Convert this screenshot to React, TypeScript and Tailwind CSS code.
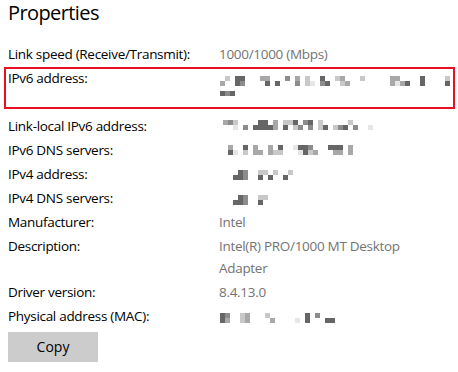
import React from "react";

const shade: Record<string, string> = {
  "1": "bg-[#e6e6e6]",
  "2": "bg-[#c8c8c8]",
  "3": "bg-[#a8a8a8]",
  "4": "bg-[#8c8c8c]",
  "5": "bg-[#666666]",
};

// pixelated (redacted) value, one string per 5px row
const Pixels = ({ rows, className }: { rows: string[]; className: string }) => (
  <div className={`flex flex-col ${className}`}>
    {rows.map((r, i) => (
      <div key={i} className="flex">
        {r.split("").map((c, j) => (
          <span key={j} className={`w-[5px] h-[5px] ${shade[c] ?? ""}`} />
        ))}
      </div>
    ))}
  </div>
);

const Row = ({ label, children }: { label: string; children: React.ReactNode }) => (
  <div className="flex">
    <div className="w-[211px] shrink-0 text-black">{label}</div>
    <div className="flex-1 text-[#737373]">{children}</div>
  </div>
);

export default function App() {
  return (
    <div className="w-[458px] h-[372px] bg-white overflow-hidden pl-2 font-['Segoe_UI','Open_Sans',sans-serif] text-[13.5px] tracking-[-0.3px] leading-[24px]">
      {/* Title */}
      <h1 className="text-[20px] leading-[26px] tracking-[-0.6px] font-normal text-black">Properties</h1>

      <div className="mt-[16px]">
        <Row label="Link speed (Receive/Transmit):">1000/1000 (Mbps)</Row>

        {/* IPv6 with red highlight box */}
        <div className="relative">
          <div className="absolute -left-1 top-[1px] w-[451px] h-[42px] border-2 border-[#e81123]" />
          <Row label="IPv6 address:">
            <div className="h-[48px]">
              <Pixels
                className="pt-[10px] pl-[1px]"
                rows={[
                  ".2.55...33...4.3.2..5..23...2.....33....5....2",
                  "3..54....5.5...4.21.45..23........3135..5....5",
                ]}
              />
              <Pixels className="mt-[5px] pl-[1px]" rows={["545"]} />
            </div>
          </Row>
        </div>

        <Row label="Link-local IPv6 address:">
          <div className="h-[24px]">
            <Pixels
              className="pt-[6px] pl-[4px]"
              rows={["342....55.3.225.45.2.....2...", "..1.4.55553.5.24.4.25.245.4..1"]}
            />
          </div>
        </Row>
        <Row label="IPv6 DNS servers:">
          <div className="h-[24px]">
            <Pixels
              className="pt-[7px] pl-[9px]"
              rows={["3..5.3..3.5..1554...555.3", "51.2.33.322...1523...33.3"]}
            />
          </div>
        </Row>
        <Row label="IPv4 address:">
          <div className="h-[24px]">
            <Pixels className="pt-[8px] pl-[14px]" rows={[".54..22.2..2", "554..5.5..5"]} />
          </div>
        </Row>
        <Row label="IPv4 DNS servers:">
          <div className="h-[24px]">
            <Pixels className="pt-[9px] pl-[14px]" rows={[".54..22", "554..5"]} />
          </div>
        </Row>
        <Row label="Manufacturer:">Intel</Row>
        <Row label="Description:">
          <div className="w-[200px] leading-[22px] pt-[1px] pb-[1px]">Intel(R) PRO/1000 MT Desktop Adapter</div>
        </Row>
        <Row label="Driver version:">8.4.13.0</Row>
        <Row label="Physical address (MAC):">
          <div className="h-[24px]">
            <Pixels
              className="pt-[9px] pl-[1px]"
              rows={["54..23...2.......5.4", "53..23....3....1.5...55"]}
            />
          </div>
        </Row>
      </div>

      <button className="mt-[4px] w-[90px] h-[30px] bg-[#cccccc] text-black text-[14px] tracking-normal">Copy</button>
    </div>
  );
}
